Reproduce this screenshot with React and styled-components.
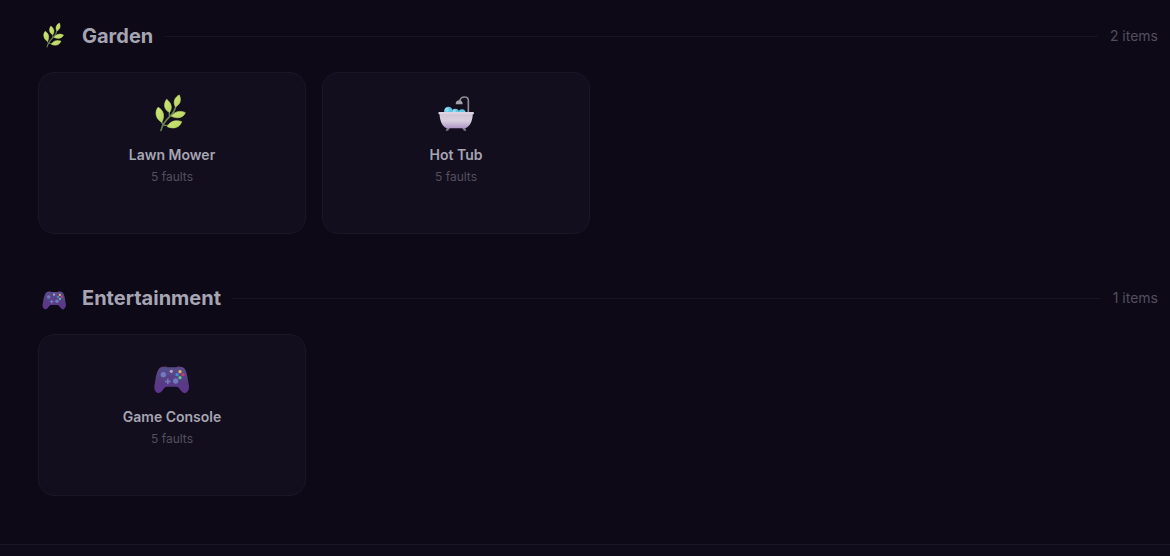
import React from 'react';
import styled, { createGlobalStyle } from 'styled-components';

const GlobalStyle = createGlobalStyle`
  * {
    box-sizing: border-box;
  }
  body {
    margin: 0;
    background: #0e0917;
    font-family: 'Inter', sans-serif;
  }
`

const Page = styled.div`
  display: flex;
  flex-direction: column;
  min-height: 100vh;
`
const Main = styled.main`
  padding: 20px 12px 0 38px;
`
const Section = styled.section`
  margin-bottom: 48px;
`
const SectionHeader = styled.header`
  display: flex;
  align-items: center;
  gap: 12px;
  height: 32px;
  margin-bottom: 20px;
`
const SectionIcon = styled.span`
  display: flex;
  justify-content: center;
  width: 32px;
  padding-bottom: 4px;
`
const SectionTitle = styled.h2`
  margin: 0;
  font-size: 20px;
  font-weight: 700;
  line-height: 32px;
  color: #a6a5b3;
`
const SectionLine = styled.div`
  flex: 1;
  height: 1px;
  background: #191424;
`
const SectionCount = styled.span`
  font-size: 14px;
  line-height: 20px;
  color: #524e5e;
`
const Grid = styled.div`
  display: grid;
  grid-template-columns: repeat(auto-fill, minmax(240px, 1fr));
  gap: 16px;
`
const Card = styled.button`
  display: flex;
  flex-direction: column;
  align-items: center;
  min-height: 162px;
  padding: 19px;
  border: 1px solid #1a1626;
  border-radius: 16px;
  background: #120e1d;
  font-family: inherit;
  cursor: pointer;
`
const CardName = styled.span`
  margin-top: 12px;
  font-size: 14px;
  font-weight: 600;
  line-height: 22px;
  color: #a6a5b3;
`
const CardFaults = styled.span`
  font-size: 12px;
  line-height: 22px;
  color: #524e5e;
`
const Footer = styled.footer`
  flex: 1;
  border-top: 1px solid #1a1626;
  background: #0f0b1a;
`
const Icon = styled.svg`
  display: block;
  width: ${({ $size }) => $size}px;
  height: ${({ $size }) => $size}px;
`

const HerbIcon = ({ size }) => (
  <Icon $size={size} viewBox="21 21 120 120" aria-hidden="true">
    <defs>
      <linearGradient id="leaf" x1="0" y1="0" x2="1" y2="1">
        <stop offset="0" stopColor="#d2e87b" />
        <stop offset="1" stopColor="#b4d25f" />
      </linearGradient>
    </defs>
    <g fill="none" stroke="#698051" strokeWidth="5" strokeLinecap="round">
      <path d="M48 136 C52 118 64 104 77 92 C87 83 90 73 93 62" />
      <path d="M54 120 L48 106 M73 94 L73 80 M77 92 L88 90 M54 121 L74 121" strokeWidth="4" />
    </g>
    <g fill="url(#leaf)" stroke="#bdd968" strokeWidth="2" strokeLinejoin="round">
      <path d="M91 65 C83 50 90 36 103 30 C109 44 107 58 91 65Z" />
      <path d="M74 82 C56 75 55 56 65 43 C79 54 83 68 74 82Z" />
      <path d="M50 112 C31 101 29 80 39 67 C55 74 61 94 50 112Z" />
      <path d="M79 94 C89 78 107 76 121 83 C115 99 97 102 79 94Z" />
      <path d="M67 125 C75 107 94 104 110 110 C104 128 86 133 67 125Z" />
    </g>
  </Icon>
)

const BathIcon = ({ size }) => (
  <Icon $size={size} viewBox="21 21 120 120" aria-hidden="true">
    <defs>
      <linearGradient id="tub" x1="0" y1="0" x2="0" y2="1">
        <stop offset="0" stopColor="#cfc3d6" />
        <stop offset="0.5" stopColor="#d9d0de" />
        <stop offset="1" stopColor="#ad94c6" />
      </linearGradient>
    </defs>
    <path d="M54 127 L50 137 H57 L63 129Z M108 127 L112 137 H105 L99 129Z" fill="#81788c" />
    <path d="M118 84 V47 Q118 36 108 36 Q95 35 92 48" fill="none" stroke="#918d96" strokeWidth="5" />
    <path d="M80 58 Q80 46 91 46 Q101 47 101 58Z" fill="#a6a1ab" />
    <g fill="#63c5e3">
      <circle cx="58" cy="78" r="13" />
      <circle cx="79" cy="82" r="11" />
      <circle cx="99" cy="84" r="11" />
    </g>
    <g fill="#8bdced">
      <circle cx="54" cy="74" r="6" />
      <circle cx="76" cy="78" r="5" />
    </g>
    <path d="M31 84 H132 Q130 117 115 127 Q111 130 105 130 H57 Q51 130 47 127 Q33 116 31 84Z" fill="url(#tub)" />
    <rect x="28" y="81" width="107" height="7" rx="3" fill="#dcd4e0" />
  </Icon>
)

const GamepadIcon = ({ size }) => (
  <Icon $size={size} viewBox="21 -3 120 120" aria-hidden="true">
    <defs>
      <linearGradient id="pad" x1="0" y1="0" x2="0" y2="1">
        <stop offset="0" stopColor="#574d8c" />
        <stop offset="0.6" stopColor="#573b83" />
        <stop offset="1" stopColor="#603390" />
      </linearGradient>
    </defs>
    <path d="M46 39 Q51 33 64 34 L68 39Z M93 39 L97 34 Q110 33 115 39Z" fill="#612152" />
    <path d="M45 38 Q50 35 62 37 H99 Q112 35 117 39 Q124 45 128 70 L132 94 Q133 108 122 114 Q114 116 108 107 L101 98 Q98 95 93 95 H66 Q61 95 58 99 L51 108 Q46 115 38 114 Q27 109 28 94 L33 64 Q37 44 45 38Z" fill="url(#pad)" />
    <g fill="#7279bd">
      <circle cx="55" cy="59" r="8" />
      <circle cx="92" cy="78" r="8" />
      <path d="M66 71 H71 V77 H77 V82 H71 V88 H66 V82 H60 V77 H66Z" />
    </g>
    <circle cx="79" cy="49" r="5" fill="#aca4b9" />
    <circle cx="105" cy="50" r="5" fill="#e4b45b" />
    <circle cx="96" cy="59" r="5" fill="#408dd4" />
    <circle cx="114" cy="59" r="5" fill="#c83e62" />
    <circle cx="105" cy="68" r="5" fill="#59c895" />
  </Icon>
)

const sections = [
  {
    title: 'Garden',
    SectionGlyph: HerbIcon,
    items: [
      { name: 'Lawn Mower', faults: 5, Glyph: HerbIcon },
      { name: 'Hot Tub', faults: 5, Glyph: BathIcon },
    ],
  },
  {
    title: 'Entertainment',
    SectionGlyph: GamepadIcon,
    items: [{ name: 'Game Console', faults: 5, Glyph: GamepadIcon }],
  },
]

const App = () => (
  <>
    <GlobalStyle />
    <Page>
      <Main>
        {sections.map(({ title, SectionGlyph, items }) => (
          <Section key={title}>
            <SectionHeader>
              <SectionIcon><SectionGlyph size={27} /></SectionIcon>
              <SectionTitle>{title}</SectionTitle>
              <SectionLine />
              <SectionCount>{`${items.length} items`}</SectionCount>
            </SectionHeader>
            <Grid>
              {items.map(({ name, faults, Glyph }) => (
                <Card key={name} type="button">
                  <Glyph size={40} />
                  <CardName>{name}</CardName>
                  <CardFaults>{`${faults} faults`}</CardFaults>
                </Card>
              ))}
            </Grid>
          </Section>
        ))}
      </Main>
      <Footer />
    </Page>
  </>
)

export default App;
